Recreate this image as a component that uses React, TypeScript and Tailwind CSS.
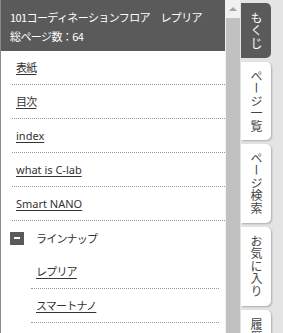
import React from "react";

const font = { fontFamily: '"Noto Sans CJK JP", "Noto Sans", sans-serif' };

function Row({ label, indent = false }: { label: string; indent?: boolean }) {
  const latin = /^[\x20-\x7e]+$/.test(label);
  return (
    <div className={`${indent ? "ml-[30px] mr-[6px] pl-[5px]" : "ml-[11px] pl-[4px]"} h-[34px] flex items-center border-b border-dotted border-[#999]`}>
      <span
        className={`text-[11px] leading-none text-[#333] underline underline-offset-[2px] ${latin ? "tracking-[0px]" : "tracking-[-0.8px]"}`}
        style={latin ? { fontFamily: '"Noto Sans", sans-serif' } : undefined}
      >
        {label}
      </span>
    </div>
  );
}

function Tab({ label, active = false, h, top = false }: { label: string; active?: boolean; h: string; top?: boolean }) {
  return (
    <div
      className={`w-[30px] ${h} shrink-0 rounded-r-[5px] flex justify-center ${top ? "items-start pt-[8px]" : "items-center"} ${
        active ? "bg-[#5a5a5a] text-white" : "bg-white text-[#444] shadow-[1px_1px_2px_rgba(0,0,0,0.25)]"
      }`}
    >
      <span className="text-[12px] leading-[12px] whitespace-nowrap tracking-[0.5px]" style={{ writingMode: "vertical-rl" }}>
        {label}
      </span>
    </div>
  );
}

export default function App() {
  return (
    <div className="w-[283px] h-[333px] flex overflow-hidden bg-[#e4e4e4]" style={font}>
      <div className="w-[225px] h-full flex flex-col bg-white border-l border-[#8a8a8a]">
        <div className="h-[51px] bg-[#5a5a5a] text-white text-[11px] leading-none tracking-[-0.6px] px-[9px] pt-[12px] flex flex-col gap-[8px] shrink-0 whitespace-nowrap">
          <div>101コーディネーションフロア　レプリア</div>
          <div>総ページ数：64</div>
        </div>
        <div className="flex flex-col">
          <Row label="表紙" />
          <Row label="目次" />
          <Row label="index" />
          <Row label="what is C-lab" />
          <Row label="Smart NANO" />
          <div className="ml-[9px] h-[34px] flex items-center">
            <div className="w-[14px] h-[13px] bg-[#5a5a5a] flex items-center justify-center">
              <div className="w-[6px] h-[2px] bg-white" />
            </div>
            <span className="ml-[12px] text-[11px] leading-none tracking-[-0.8px] text-[#333]">ラインナップ</span>
          </div>
          <Row label="レプリア" indent />
          <Row label="スマートナノ" indent />
        </div>
      </div>
      <div className="w-[15px] h-full bg-[#f1f1f1] flex flex-col items-center shrink-0">
        <div className="h-[18px] flex items-center justify-center">
          <div className="w-0 h-0 border-l-[4px] border-r-[4px] border-b-[4px] border-l-transparent border-r-transparent border-b-[#a3a3a3]" />
        </div>
        <div className="w-[14px] flex-1 bg-[#c1c1c1]" />
      </div>
      <div className="flex-1 h-full pt-[3px] pl-[1px] flex flex-col gap-[4px]">
        <Tab label="もくじ" active h="h-[55px]" />
        <Tab label="ページ一覧" h="h-[78px]" />
        <Tab label="ページ検索" h="h-[79px]" />
        <Tab label="お気に入り" h="h-[79px]" />
        <Tab label="履歴" h="h-[60px]" top />
      </div>
    </div>
  );
}
